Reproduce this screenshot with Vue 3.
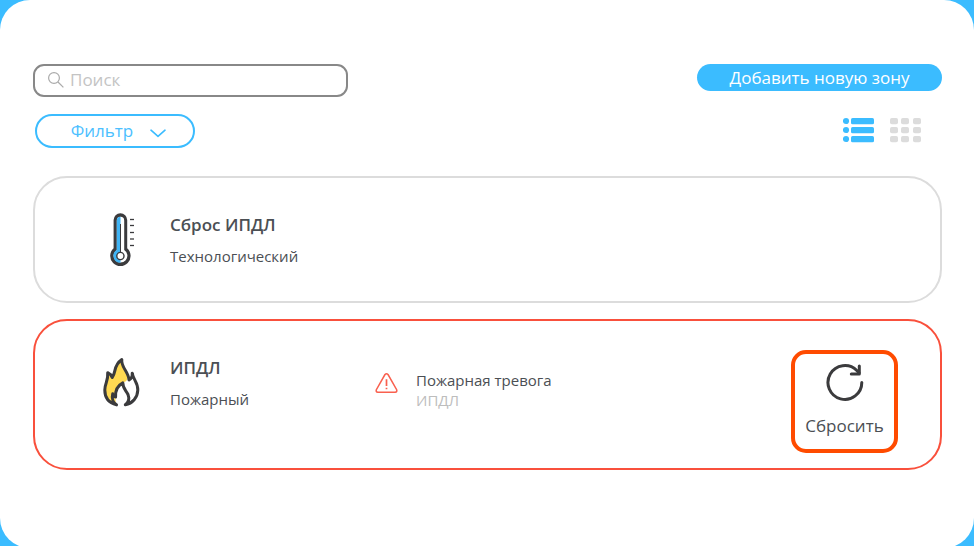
<script setup>
import { ref } from 'vue'

const query = ref('')
const view = ref('list')
const rows = [0, 9, 18]
const cols = [0, 11, 23]
const ticks = [8.5, 14.5, 21.5, 28, 34.5]
</script>

<template>
  <main class="panel">
    <div class="bar">
      <label class="search">
        <svg class="search-icon" viewBox="0 0 16 16" aria-hidden="true">
          <circle cx="6" cy="6" r="5.4" />
          <path d="M10 10L15.4 15.4" />
        </svg>
        <input v-model="query" type="text" placeholder="Поиск" aria-label="Поиск" />
      </label>
      <button class="add" type="button">Добавить новую зону</button>
    </div>

    <div class="bar tools">
      <button class="filter" type="button">
        <span>Фильтр</span>
        <svg class="chevron" viewBox="0 0 16 9" aria-hidden="true"><path d="M1 1.2L8 7.4L15 1.2" /></svg>
      </button>
      <div class="views">
        <button type="button" class="view" :class="{ active: view === 'list' }" aria-label="Список" @click="view = 'list'">
          <svg viewBox="0 0 31 26" aria-hidden="true">
            <template v-for="y in rows" :key="y">
              <circle cx="3" :cy="y + 4" r="3.1" />
              <rect x="8" :y="y + 1" width="23" height="6.3" rx="1.6" />
            </template>
          </svg>
        </button>
        <button type="button" class="view" :class="{ active: view === 'grid' }" aria-label="Плитка" @click="view = 'grid'">
          <svg viewBox="0 0 31 26" aria-hidden="true">
            <template v-for="y in rows" :key="y">
              <rect v-for="x in cols" :key="x" :x="x" :y="y + 1" width="8" height="6.3" rx="1.8" />
            </template>
          </svg>
        </button>
      </div>
    </div>

    <section class="zones">
      <article class="card">
        <svg class="zone-icon" viewBox="0 0 40 56" aria-hidden="true">
          <path class="ink" d="M12.600 9a6.800 6.800 0 0 1 13.600 0V37.300a10.200 10.200 0 1 1-13.600 0Z" />
          <path class="white" d="M15.800 9.500a3.700 3.700 0 0 1 7.400 0V38.900a6.900 6.900 0 1 1-7.400 0Z" />
          <path class="blue" d="M15.800 9.500a3.700 3.700 0 0 1 3.700-3.700V51.700a6.900 6.900 0 0 1-3.700-12.800Z" />
          <path class="ink-line" d="M19.500 13V41" />
          <circle class="bulb" cx="19.400" cy="45" r="3.600" />
          <path v-for="t in ticks" :key="t" class="tick" :d="`M29 ${t}h4`" />
        </svg>
        <div class="info">
          <h2>Сброс ИПДЛ</h2>
          <p>Технологический</p>
        </div>
      </article>

      <article class="card alarm">
        <svg class="zone-icon" viewBox="0 0 40 56" aria-hidden="true">
          <path class="flame-fill" d="M15 50.500C6 47 3 41 4 33C4.500 27 7 26 7 19L11 23.500C15 19 12.500 13 20.500 6C20 13 27 17 26.500 25C25 29 20 28 15.500 34C14 37 14 39 14.200 43Z" />
          <path class="flame" d="M15.500 50.800C8 49 3.800 43.500 3.800 36C3.800 29 7.400 27.500 6.700 18.700C9 19.700 10.300 21 11.200 23.500C15.500 18 12 11.500 20.800 5.500C19.800 13.500 27.600 17.500 28 26C30.500 24.500 31.600 22.500 31.200 19.200C32.400 26 37 28.500 36.800 36C36.600 43.500 31.500 49.500 24.300 50.800C28 48 28.500 44.500 27 40.500C25 36.500 21.600 34 21.800 28.800C16.500 31.500 14.200 37 14.600 43C12.800 42.500 12 41.500 11.700 39.800C10.500 44 12 48.500 15.500 50.800" />
        </svg>
        <div class="info">
          <h2>ИПДЛ</h2>
          <p>Пожарный</p>
        </div>
        <div class="event">
          <svg class="warning" viewBox="0 0 24 22" aria-hidden="true">
            <path d="M10.400 2.200Q12 .4 13.600 2.200L22.600 18Q23.400 20.400 21 20.600H3Q.6 20.400 1.400 18Z" />
            <path class="mark" d="M12 7V14M12 16V17.600" />
          </svg>
          <div>
            <p class="event-name">Пожарная тревога</p>
            <p class="event-zone">ИПДЛ</p>
          </div>
        </div>
        <button class="reset" type="button">
          <svg viewBox="0 0 40 40" aria-hidden="true">
            <path d="M36.800 20.500A16.900 16.900 0 1 1 31.800 8.500L34 10.800" />
            <path d="M34.300 4V12H26.300" />
          </svg>
          <span>Сбросить</span>
        </button>
      </article>
    </section>
  </main>
</template>

<style>
body {
  background: #3bbcff;
  overflow: hidden;
}
</style>

<style scoped>
.panel {
  box-sizing: border-box;
  min-height: calc(100vh + 2px);
  padding: 64px 32px 64px 33px;
  border-radius: 30px;
  background: #fff;
  color: #4b4f54;
  font-family: "Open Sans", "Noto Sans", sans-serif;
}

button {
  box-sizing: border-box;
  margin: 0;
  padding: 0;
  border: 0;
  background: none;
  font-family: inherit;
  cursor: pointer;
}

svg {
  display: block;
  flex: none;
}

h2,
p {
  margin: 0;
}

.bar {
  display: flex;
  justify-content: space-between;
  align-items: flex-start;
}

.search {
  box-sizing: border-box;
  display: flex;
  align-items: center;
  gap: 6px;
  width: 315px;
  height: 33px;
  padding: 0 13px 2px;
  border: 2px solid #888;
  border-radius: 11px;
}

.search-icon {
  width: 16px;
  height: 16px;
  fill: none;
  stroke: #aaa;
  stroke-width: 1.2;
}

.search input {
  flex: 1;
  min-width: 0;
  padding: 0;
  border: 0;
  outline: 0;
  background: none;
  color: #4b4f54;
  font-family: inherit;
  font-size: 17px;
  line-height: 24px;
}

.search input::placeholder {
  color: #c4c4c4;
  opacity: 1;
}

.add {
  width: 245px;
  height: 27px;
  border-radius: 14px;
  background: #3bbcff;
  color: #fff;
  font-size: 17px;
  font-weight: 500;
  line-height: 27px;
}

.tools {
  margin-top: 17px;
  padding: 0 21px 0 2px;
}

.filter {
  display: flex;
  align-items: center;
  justify-content: center;
  gap: 17px;
  width: 160px;
  height: 34px;
  padding-left: 7px;
  border: 2px solid #3bbcff;
  border-radius: 17px;
  color: #4cc0ff;
  font-size: 17px;
  line-height: 24px;
}

.chevron {
  width: 16px;
  height: 9px;
  margin-top: 4px;
  fill: none;
  stroke: #3bbcff;
  stroke-width: 1.6;
  stroke-linecap: round;
  stroke-linejoin: round;
}

.views {
  display: flex;
  gap: 16px;
  padding-top: 3px;
}

.view svg {
  width: 31px;
  height: 26px;
  fill: #dcdcdc;
}

.view.active svg {
  fill: #3bbcff;
}

.zones {
  display: grid;
  gap: 16px;
  margin-top: 28px;
}

.card {
  box-sizing: border-box;
  display: flex;
  align-items: flex-start;
  min-height: 127px;
  padding: 29px 42px 15px 66px;
  border: 2px solid #dcdcdc;
  border-radius: 34px;
}

.alarm {
  border-color: #f9503c;
}

.zone-icon {
  width: 40px;
  height: 56px;
  margin-top: 4px;
}

.ink {
  fill: #3b3b3d;
}

.white {
  fill: #fff;
}

.blue {
  fill: #3fb4f5;
}

.ink-line {
  fill: none;
  stroke: #3b3b3d;
  stroke-width: 1;
}

.bulb {
  fill: #fff;
  stroke: #3b3b3d;
  stroke-width: 1.4;
}

.tick {
  stroke: #3b3b3d;
  stroke-width: 1.3;
}

.flame-fill {
  fill: #ffd952;
}

.flame {
  fill: none;
  stroke: #3b3b3d;
  stroke-width: 3;
  stroke-linecap: round;
  stroke-linejoin: round;
}

.info {
  width: 205px;
  margin-left: 29px;
  padding-top: 6px;
}

.info h2 {
  font-size: 17px;
  font-weight: 600;
  line-height: 24px;
}

.info p {
  margin-top: 8px;
  font-size: 15px;
  line-height: 22px;
}

.event {
  display: flex;
  align-items: flex-start;
  gap: 18px;
  padding-top: 20px;
}

.warning {
  width: 23px;
  height: 22px;
  margin-top: 2px;
  fill: none;
  stroke: #f9604f;
  stroke-width: 1.6;
}

.mark {
  stroke-width: 1.8;
}

.event-name,
.event-zone {
  font-size: 15px;
  line-height: 20px;
}

.event-zone {
  color: #bdbdbd;
}

.reset {
  display: flex;
  flex-direction: column;
  align-items: center;
  gap: 12px;
  width: 107px;
  height: 103px;
  margin-left: auto;
  padding-top: 8px;
  border: 4px solid #ff4b00;
  border-radius: 15px;
  color: #4b4f54;
  font-size: 17px;
  line-height: 24px;
}

.reset svg {
  width: 40px;
  height: 40px;
  fill: none;
  stroke: #3b3b3d;
  stroke-width: 3;
  stroke-linecap: round;
  stroke-linejoin: round;
}
</style>
